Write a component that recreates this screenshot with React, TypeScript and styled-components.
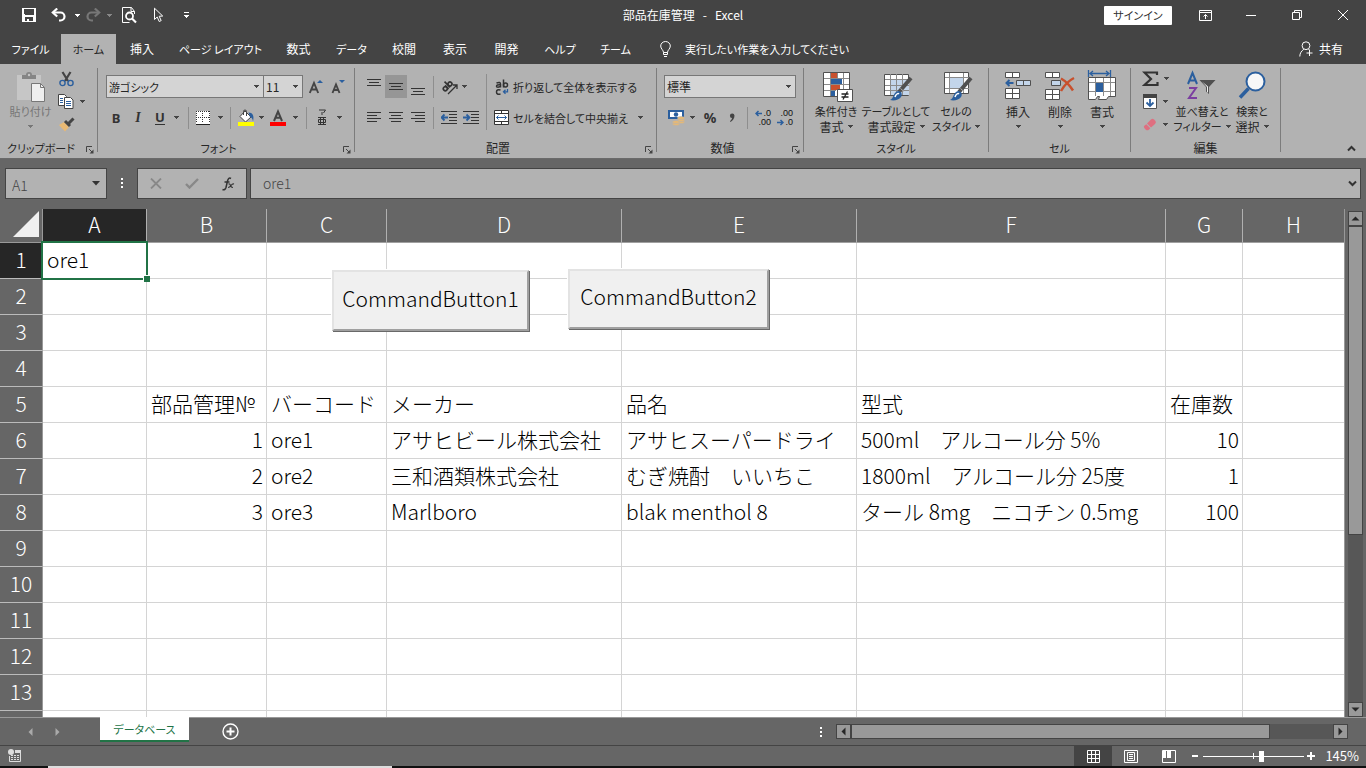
import React from "react";
import styled, { createGlobalStyle, css } from "styled-components";

const UI = `"Noto Sans CJK JP", "Noto Sans", sans-serif`;

const GlobalStyle = createGlobalStyle`
  * { box-sizing: border-box; }
  html, body, #root { height: 100%; }
  body {
    margin: 0;
    overflow: hidden;
    background: #666;
    color: #262626;
    font: 12px/16px ${UI};
    font-feature-settings: "palt";
  }
  button, input, select { font: inherit; font-feature-settings: inherit; color: inherit; }
  svg { display: block; flex: none; }
`;

/* ---------- shell ---------- */

const Shell = styled.div`
  display: flex;
  flex-direction: column;
  height: 100vh;
  white-space: nowrap;
`;

const PlainButton = styled.button`
  display: flex;
  align-items: center;
  justify-content: center;
  padding: 0;
  border: 0;
  background: none;
`;

const Text = styled.span<{ $compact: boolean }>`
  font-size: ${(p) => (p.$compact ? 11 : 12)}px;
`;

/* Labels with kana are set one size smaller than pure kanji ones. */
const Label = ({ children }: { children: string }) => (
  <Text $compact={/[ぁ-ヶ]/.test(children)}>{children}</Text>
);

/* ---------- title bar ---------- */

const TitleBar = styled.header`
  display: grid;
  grid-template-columns: 1fr auto 1fr;
  align-items: center;
  height: 34px;
  padding-bottom: 4px;
  background: #444;
  color: #fff;
`;

const QuickAccess = styled.div`
  display: flex;
  align-items: center;
  height: 30px;
  padding-left: 16px;
`;

const QuickButton = styled(PlainButton)<{ $w: number }>`
  width: ${(p) => p.$w}px;
  height: 30px;
`;

const Title = styled.h1`
  display: flex;
  gap: 8px;
  margin: 0;
  font-size: 12px;
  font-weight: 400;
`;

const WindowControls = styled.div`
  display: flex;
  align-items: center;
  justify-content: flex-end;
`;

const SignIn = styled(PlainButton)`
  width: 68px;
  height: 19px;
  margin-right: 10px;
  border-radius: 1px;
  background: #fff;
  color: #333;
`;

const WindowButton = styled(PlainButton)`
  width: 46px;
  height: 30px;
`;

/* ---------- ribbon tabs ---------- */

const TabStrip = styled.nav`
  display: flex;
  align-items: stretch;
  height: 30px;
  background: #444;
  color: #fff;
`;

const Tab = styled(PlainButton)<{ $w: number; $active?: boolean }>`
  width: ${(p) => p.$w}px;
  ${(p) => p.$active && css`
    background: #b2b2b2;
    color: #262626;
  `}
`;

const TellMe = styled(PlainButton)`
  gap: 14px;
  margin-left: 17px;
`;

const Share = styled(PlainButton)`
  gap: 6px;
  margin-left: auto;
  margin-right: 23px;
`;

/* ---------- ribbon ---------- */

const Ribbon = styled.section`
  display: flex;
  height: 95px;
  background: #b2b2b2;
  border-bottom: 1px solid #6a6a6a;
`;

const Group = styled.div<{ $w: number }>`
  display: flex;
  flex-direction: column;
  width: ${(p) => p.$w}px;
`;

const GroupBody = styled.div<{ $pad?: number }>`
  display: flex;
  height: 76px;
  padding-left: ${(p) => p.$pad ?? 0}px;
`;

const GroupFooter = styled.div`
  display: flex;
  align-items: center;
  height: 16px;
`;

const GroupLabel = styled.span`
  flex: 1;
  text-align: center;
`;

const Launcher = styled(PlainButton)`
  width: 15px;
  height: 16px;
  padding-top: 3px;
`;

const GroupDivider = styled.div`
  width: 1px;
  margin: 4px 0 6px;
  background: #7c7c7c;
`;

const Rows = styled.div<{ $pad?: number }>`
  display: flex;
  flex-direction: column;
  flex: none;
  gap: 8px;
  padding-top: 11px;
  padding-left: ${(p) => p.$pad ?? 8}px;
`;

const Row = styled.div`
  display: flex;
  align-items: center;
  height: 23px;
`;

const Stack = styled.div<{ $w: number }>`
  display: flex;
  flex-direction: column;
  width: ${(p) => p.$w}px;
  padding-top: 3px;
`;

const Tool = styled(PlainButton)<{ $w?: number; $on?: boolean }>`
  width: ${(p) => p.$w ?? 22}px;
  height: 23px;
  background: ${(p) => (p.$on ? "#969696" : "none")};
`;

const Letter = styled.span<{ $italic?: boolean; $underline?: boolean; $size?: number; $serif?: boolean }>`
  font: ${(p) => (p.$italic ? "italic" : "normal")} 700 ${(p) => p.$size ?? 13}px/14px
    ${(p) => (p.$serif ? `"Liberation Serif", serif` : `"Noto Sans", sans-serif`)};
  border-bottom: ${(p) => (p.$underline ? "1px solid #333" : "0")};
  color: #333;
`;

const ToolDivider = styled.div<{ $before?: number; $after?: number }>`
  width: 1px;
  height: 22px;
  margin-left: ${(p) => p.$before ?? 4}px;
  margin-right: ${(p) => p.$after ?? 4}px;
  background: #8e8e8e;
`;

const TallDivider = styled.div`
  flex: none;
  width: 1px;
  height: 56px;
  margin: 10px 7px 0 4px;
  background: #8e8e8e;
`;

const TextTool = styled(PlainButton)`
  justify-content: flex-start;
  gap: 4px;
  height: 23px;
`;

const ComboBox = styled.label<{ $w: number }>`
  position: relative;
  display: flex;
  width: ${(p) => p.$w}px;
  height: 23px;
  & + & { margin-left: -1px; }
  svg { position: absolute; right: 5px; top: 10px; pointer-events: none; }
`;

const ComboSelect = styled.select<{ $compact: boolean }>`
  appearance: none;
  width: 100%;
  padding: 0 0 0 2px;
  border: 1px solid #777;
  border-radius: 0;
  background: #d4d4d4;
  font-size: ${(p) => (p.$compact ? 11 : 12)}px;
`;

const BigButton = styled(PlainButton)<{ $w: number; $dim?: boolean }>`
  flex-direction: column;
  justify-content: flex-start;
  width: ${(p) => p.$w}px;
  padding-top: 6px;
  line-height: 15px;
  color: ${(p) => (p.$dim ? "#777" : "inherit")};
`;

const BigIcon = styled.span`
  display: block;
  height: 32px;
  margin-bottom: 2px;
`;

const BigLine = styled.span`
  display: flex;
  align-items: center;
  justify-content: center;
  gap: 4px;
  height: 15px;
`;

const Collapse = styled(PlainButton)`
  align-self: flex-end;
  width: 30px;
  height: 20px;
  margin-left: auto;
`;

/* ---------- formula bar ---------- */

const FormulaBar = styled.section`
  display: flex;
  height: 50px;
  padding: 9px 5px 10px;
  background: #666;
  color: #444;
`;

const barBox = css`
  height: 31px;
  border: 1px solid #444;
  background: #b2b2b2;
`;

const NameBox = styled.div`
  ${barBox}
  display: flex;
  align-items: center;
  width: 102px;
  padding-right: 6px;
`;

const BarInput = styled.input`
  flex: 1;
  min-width: 0;
  padding: 2px 0 0 6px;
  border: 0;
  background: none;
  font-size: 14px;
  font-weight: 300;
`;

const BarGrip = styled.div`
  display: flex;
  align-items: center;
  justify-content: center;
  width: 30px;
  height: 29px;
`;

const FormulaTools = styled.div`
  ${barBox}
  display: flex;
  width: 110px;
  margin-right: 3px;
`;

const FormulaButton = styled(PlainButton)`
  width: 36px;
`;

const FormulaField = styled.div`
  ${barBox}
  display: flex;
  align-items: center;
  flex: 1;
  padding-left: 6px;
  padding-right: 3px;
  ${BarInput} { padding-top: 0; padding-bottom: 2px; }
`;

/* ---------- sheet ---------- */

const Workspace = styled.main`
  display: flex;
  flex: 1;
  min-height: 0;
`;

const SheetArea = styled.div`
  position: relative;
  flex: 1;
  min-width: 0;
  overflow: hidden;
  background: #fff;
  border-right: 1px solid #999;
`;

const SheetTable = styled.table`
  width: 100%;
  table-layout: fixed;
  border-collapse: separate;
  border-spacing: 0;
  font-size: 21px;
  line-height: 33px;
  font-weight: 300;
  font-feature-settings: normal;
`;

const Column = styled.col<{ $w?: number }>`
  width: ${(p) => (p.$w ? `${p.$w}px` : "auto")};
`;

const Corner = styled.td`
  height: 34px;
  padding: 0 3px 3px 0;
  background: #666;
  border-right: 1px solid #999;
  border-bottom: 1px solid #999;
  svg { margin-left: auto; }
`;

const ColumnHead = styled.th<{ $active?: boolean }>`
  height: 34px;
  padding: 0 0 2px;
  background: ${(p) => (p.$active ? "#262626" : "#666")};
  border-right: 1px solid #b0b0b0;
  border-bottom: 1px solid #a0a0a0;
  color: #fff;
  font-weight: 300;
  line-height: 31px;
  &:last-child { border-right: 0; }
`;

const RowHead = styled.th<{ $active?: boolean }>`
  height: 36px;
  padding: 0 0 2px;
  background: ${(p) => (p.$active ? "#262626" : "#666")};
  border-right: 1px solid #999;
  border-bottom: 1px solid #bbb;
  color: #fff;
  font-weight: 300;
`;

const Cell = styled.td<{ $right?: boolean }>`
  position: relative;
  height: 36px;
  padding: 0 3px 2px 4px;
  border-right: 1px solid #d4d4d4;
  border-bottom: 1px solid #d4d4d4;
  color: #000;
  text-align: ${(p) => (p.$right ? "right" : "left")};
  &:last-child { border-right: 0; }
`;

const Selection = styled.span`
  position: absolute;
  z-index: 1;
  inset: -2px;
  border: 2px solid #217346;
  &::after {
    content: "";
    position: absolute;
    right: -4px;
    bottom: -4px;
    width: 6px;
    height: 6px;
    border: 1px solid #fff;
    border-width: 1px 0 0 1px;
    background: #217346;
  }
`;

const CommandButton = styled.button<{ $x: number; $y: number; $w: number; $h: number }>`
  position: absolute;
  z-index: 2;
  left: ${(p) => p.$x}px;
  top: ${(p) => p.$y}px;
  width: ${(p) => p.$w}px;
  height: ${(p) => p.$h}px;
  padding: 0 0 6px;
  border: 2px solid;
  border-color: #e3e3e3 #a0a0a0 #a0a0a0 #e3e3e3;
  box-shadow: 1px 1px 0 #696969, -1px -1px 0 #fff;
  background: #f0f0f0;
  color: #000;
  font-size: 21px;
  font-weight: 300;
  font-feature-settings: normal;
`;

const VerticalScroll = styled.div`
  display: flex;
  flex-direction: column;
  width: 21px;
  padding: 2px 3px 0;
  background: #666;
`;

const scrollPiece = css`
  border: 1px solid #444;
  background: #999;
`;

const ScrollButton = styled(PlainButton)`
  ${scrollPiece}
  flex: none;
  width: 15px;
  height: 15px;
`;

const ScrollTrack = styled.div<{ $vertical?: boolean }>`
  display: flex;
  flex: 1;
  flex-direction: ${(p) => (p.$vertical ? "column" : "row")};
  background: #575757;
`;

const ScrollThumb = styled.div<{ $share: number }>`
  ${scrollPiece}
  flex: 0 0 ${(p) => p.$share}%;
`;

/* ---------- sheet tabs ---------- */

const SheetBar = styled.div`
  display: flex;
  height: 28px;
  border-top: 1px solid #999;
  background: #666;
`;

const SheetNav = styled.div`
  display: flex;
  width: 100px;
  padding-left: 17px;
`;

const NavButton = styled(PlainButton)`
  width: 27px;
`;

const SheetTab = styled(PlainButton)`
  width: 89px;
  height: 25px;
  margin-top: -1px;
  border-bottom: 2px solid #217346;
  background: #fff;
  color: #217346;
`;

const AddSheet = styled(PlainButton)`
  width: 82px;
`;

const ScrollArea = styled.div`
  display: flex;
  align-items: center;
  width: 41%;
  margin-left: auto;
  padding-right: 18px;
`;

const ScrollGrip = styled.div`
  display: flex;
  flex: none;
  justify-content: center;
  width: 30px;
`;

const HorizontalScroll = styled.div`
  display: flex;
  flex: 1;
  height: 15px;
`;

/* ---------- status bar ---------- */

const StatusBar = styled.footer`
  display: flex;
  align-items: stretch;
  height: 21px;
  border-top: 1px solid #444;
  background: #666;
  color: #fff;
`;

const StatusButton = styled(PlainButton)<{ $w: number; $on?: boolean }>`
  width: ${(p) => p.$w}px;
  background: ${(p) => (p.$on ? "#444" : "none")};
`;

const ViewControls = styled.div`
  display: flex;
  margin-left: auto;
  padding-right: 7px;
`;

const ZoomSlider = styled.input`
  align-self: center;
  appearance: none;
  width: 101px;
  height: 12px;
  margin: 0 1px;
  background:
    linear-gradient(#fff, #fff) 50% 50% / 1px 6px no-repeat,
    linear-gradient(#fff, #fff) 0 50% / 100% 1px no-repeat;
  &::-webkit-slider-thumb {
    appearance: none;
    width: 5px;
    height: 11px;
    border: 0;
    background: #fff;
  }
`;

const ZoomLevel = styled(PlainButton)`
  width: 42px;
  justify-content: flex-end;
  font-size: 13px;
`;

const TaskbarEdge = styled.div`
  display: flex;
  height: 2px;
  padding-left: 48px;
  background: #111;
`;

const TaskbarItem = styled.div`
  width: 344px;
  background: #ddd;
`;

/* ---------- icons ---------- */

const Caret = ({ color = "#444" }: { color?: string }) => (
  <svg width="5" height="3" viewBox="0 0 5 3" shapeRendering="crispEdges"><path d="M0 0h5v1H0zM1 1h3v1H1zM2 2h1v1H2z" fill={color} /></svg>
);

const Arrow = ({ dir }: { dir: "up" | "down" | "left" | "right" }) => {
  const d = { up: "M4.5 2.5l4 4h-8z", down: "M.5 2.5h8l-4 4z", left: "M6.5.5v8l-4-4z", right: "M2.5.5v8l4-4z" }[dir];
  return <svg width="9" height="9" viewBox="0 0 9 9"><path d={d} fill="#262626" /></svg>;
};

const SaveIcon = () => (
  <svg width="14" height="14" viewBox="0 0 14 14" shapeRendering="crispEdges"><path fill="#fff" fillRule="evenodd" d="M0 0h13l1 1v13H0zM2 1v5l1 1h8l1-1V1zM3 9v4h2v-2h2v2h4V9z" /></svg>
);
const UndoIcon = ({ redo }: { redo?: boolean }) => (
  <svg width="15" height="14" viewBox="0 0 15 14">
    <g transform={redo ? "matrix(-1 0 0 1 15 0)" : undefined} fill="none" stroke={redo ? "#777" : "#fff"} strokeWidth="2.200">
      <path d="M2 4.500h7.500a4 4 0 010 8H8" /><path d="M6.200.5L1.800 4.500l4.400 4" />
    </g>
  </svg>
);
const PreviewIcon = () => (
  <svg width="15" height="17" viewBox="0 0 15 17" fill="none" stroke="#fff"><path d="M12.500 7V4.500l-3-4H.5v15h7" /><path d="M9 .5V4.500h3.500" /><circle cx="7.500" cy="9" r="3.500" strokeWidth="1.800" fill="#444" /><path d="M10 11.500l4 4" strokeWidth="2.200" /></svg>
);
const CursorIcon = () => (
  <svg width="11" height="16" viewBox="0 0 11 16"><path d="M1.500 1.200v11.300l2.700-2.500 2 4.500 2-.9-2-4.300 3.500-.3z" fill="none" stroke="#fff" /></svg>
);
const CustomizeIcon = () => (
  <svg width="5" height="7" viewBox="0 0 5 7" shapeRendering="crispEdges" fill="#fff"><path d="M0 0h5v1H0zM0 3h5v1H0zM1 4h3v1H1zM2 5h1v1H2z" /></svg>
);
const RibbonOptionsIcon = () => (
  <svg width="13" height="11" viewBox="0 0 13 11" fill="none" stroke="#fff"><path d="M.5.5h12v10H.5zM.5 2.500h12M6.500 9V4.500M4.500 6.500l2-2 2 2" /></svg>
);
const MinimizeIcon = () => <svg width="10" height="1" viewBox="0 0 10 1"><path d="M0 0h10v1H0z" fill="#fff" /></svg>;
const RestoreIcon = () => (
  <svg width="10" height="10" viewBox="0 0 10 10" fill="none" stroke="#fff"><path d="M.5 2.500h7v7h-7zM2.500 2.500v-2h7v7h-2" /></svg>
);
const CloseIcon = () => <svg width="10" height="10" viewBox="0 0 10 10"><path d="M0 0l10 10M10 0L0 10" stroke="#fff" /></svg>;
const BulbIcon = () => (
  <svg width="11" height="16" viewBox="0 0 11 16" fill="none" stroke="#fff"><path d="M3.500 11.500C3.500 9 .7 8 .7 5a4.800 4.500 0 019.600 0c0 3-2.800 4-2.800 6.500zM3.500 11.500v2h4v-2M4 15.500h3" /></svg>
);
const PersonIcon = () => (
  <svg width="14" height="16" viewBox="0 0 14 16" fill="none" stroke="#fff"><circle cx="7" cy="4.700" r="3.900" /><path d="M.8 15.500c0-3.500 1.800-5.500 4-7.200M9.500 8l1 1M10.500 9v6M7.500 12h6" /></svg>
);

const PasteIcon = () => (
  <svg width="30" height="32" viewBox="0 0 30 32">
    <path d="M1 5h24v25H1z" fill="#c6c6c6" />
    <path d="M6 9V5h4a3 3 0 016 0h4v4z" fill="#858585" /><circle cx="13" cy="5" r="1.200" fill="#c6c6c6" />
    <path d="M15.500 13.500h9l4 4v14h-13z" fill="#efefef" stroke="#777" /><path d="M24.500 13.500v4h4" fill="none" stroke="#777" />
  </svg>
);
const CutIcon = () => (
  <svg width="15" height="16" viewBox="0 0 15 16"><path d="M3.500 1l5.500 9M11.500 1L6 10" stroke="#444" strokeWidth="2.200" /><g fill="none" stroke="#2b5f9e" strokeWidth="1.400"><circle cx="3.500" cy="12" r="2.600" /><circle cx="11.500" cy="12" r="2.600" /></g></svg>
);
const CopyIcon = () => (
  <svg width="16" height="15" viewBox="0 0 16 15"><g fill="#fff" stroke="#444"><path d="M.5.5h6l2 2v9h-8z" /><path d="M6.500 3.500h6l2.500 2.500v8.500H6.500z" /></g><path d="M2 4.500h3M2 6.500h3M2 8.500h3M8 7.500h5M8 9.500h5M8 11.500h5" stroke="#2b5f9e" /></svg>
);
const BrushIcon = () => (
  <svg width="16" height="15" viewBox="0 0 16 15"><path d="M0 8l5-3 5 5-4 4.500z" fill="#e8b974" /><path d="M6 4l5 5M9 7l5.500-5.500" stroke="#444" strokeWidth="3" /></svg>
);
const LauncherIcon = () => (
  <svg width="8" height="8" viewBox="0 0 8 8"><path d="M.5 6V.5H6M3 3l4 4" fill="none" stroke="#444" /><path d="M7.500 3.500v4h-4z" fill="#444" /></svg>
);
const SizeIcon = ({ small }: { small?: boolean }) => (
  <svg width="14" height="16" viewBox="0 0 14 16">
    {small
      ? <><path d="M1.500 14L5 5.500 8.500 14M2.800 11h4.400" fill="none" stroke="#444" strokeWidth="1.900" /><path d="M8 1h6l-3 3z" fill="#2b5f9e" /></>
      : <><path d="M.8 14L5 4l4.200 10M2.500 10.500h5" fill="none" stroke="#444" strokeWidth="1.900" /><path d="M8 4h6l-3-3z" fill="#2b5f9e" /></>}
  </svg>
);
const BorderIcon = () => (
  <svg width="14" height="14" viewBox="0 0 14 14"><path d="M0 0h14v14H0z" fill="#fff" /><g stroke="#333" strokeDasharray="1 1"><path d="M0 .5h13M0 6.500h13M.5 0v12M6.500 0v12M13.500 0v12" /></g><path d="M0 13.500h14" stroke="#222" /></svg>
);
const FillIcon = () => (
  <svg width="17" height="17" viewBox="0 0 17 17"><path d="M7 2l6 6-5.500 5L2 7.500z" fill="#fff" stroke="#444" /><path d="M5.500 6V2.500a1.500 1.500 0 013 0V7" fill="none" stroke="#444" /><path d="M10.500 3.500c4 0 6 3 4.500 9-.5-3-1.500-4-3-4.500z" fill="#2b5f9e" /><path d="M0 13h16v4H0z" fill="#ff0" /></svg>
);
const FontColorIcon = () => (
  <svg width="16" height="17" viewBox="0 0 16 17"><path d="M4 12l4-9.500L12 12M5.500 8.800h5" fill="none" stroke="#444" strokeWidth="2" /><path d="M0 13h16v4H0z" fill="red" /></svg>
);
const PhoneticIcon = () => (
  <svg width="10" height="17" viewBox="0 0 10 17" fill="none" stroke="#333"><path d="M2 1h6.500L6.500 4M5 3v3M1 8.500h8M1 15.500h8M3.500 8.500v7M6.500 8.500v7M1.500 10.500h7v3h-7z" /></svg>
);

const LinesIcon = ({ kind }: { kind: "top" | "middle" | "bottom" | "left" | "center" | "right" }) => {
  const vertical = { top: 1, middle: 5, bottom: 10 } as Record<string, number>;
  const start = vertical[kind];
  const lines = start !== undefined
    ? [[0, start, 14], [2, start + 3, 10], [0, start + 6, 14]]
    : [0, 1, 2, 3].map((i) => {
        const w = i % 2 ? 10 : 14;
        const x = kind === "left" ? 0 : kind === "center" ? (14 - w) / 2 : 14 - w;
        return [x, 3 + i * 3, w];
      });
  return <svg width="14" height="17" viewBox="0 0 14 17" shapeRendering="crispEdges">{lines.map(([x, y, w]) => <rect key={y} x={x} y={y} width={w} height="1" fill="#333" />)}</svg>;
};
const OrientationIcon = () => (
  <svg width="17" height="16" viewBox="0 0 17 16" fill="none" stroke="#333" strokeWidth="1.600">
    <g transform="rotate(-45 7 7)"><circle cx="3.200" cy="7" r="2" /><path d="M5.400 4.500v5M7.600 1.500v8" /><circle cx="9.800" cy="7" r="2" /></g>
    <path d="M7 15l8.500-8.500M12 6h4v4" strokeWidth="1.300" />
  </svg>
);
const IndentIcon = ({ more }: { more?: boolean }) => (
  <svg width="16" height="15" viewBox="0 0 16 15"><path d="M0 1.500h16M8 4.500h8M8 7.500h8M8 10.500h8M0 13.500h16" stroke="#333" /><path d={more ? "M0 7.500h6M3.500 4.500l3 3-3 3" : "M1 7.500h6M3.500 4.500l-3 3 3 3"} stroke="#2b5f9e" strokeWidth="1.800" fill="none" /></svg>
);
const WrapIcon = () => (
  <svg width="15" height="16" viewBox="-1 0 15 16" fill="none" stroke="#333" strokeWidth="1.500"><path d="M1.500 4q4-1.500 4 1v3.500M5.500 5.800q-4-.3-4 1.400t4 .3M8.500.5v8" /><circle cx="10.500" cy="6" r="2" /><path d="M5.500 11q-4-1-4 2t4 2" /><path d="M12.500 10v2.800H8.500M10.500 10.800l-2 2 2 2" stroke="#2b5f9e" strokeWidth="1.300" /></svg>
);
const MergeIcon = () => (
  <svg width="15" height="15" viewBox="0 0 15 15" fill="#fff" stroke="#333"><path d="M.5.5h14v14H.5zM.5 3.500h14M.5 11.500h14M7.500.5v3M7.500 11.500v3" /><path d="M2.500 7.500h10M4.500 5.500l-2 2 2 2M10.500 5.500l2 2-2 2" fill="none" stroke="#2b5f9e" /></svg>
);
const CurrencyIcon = () => (
  <svg width="17" height="16" viewBox="0 0 17 16"><path d="M0 0h16v9H0z" fill="#2b5f9e" /><path d="M2 2h12v5H2z" fill="#fff" /><circle cx="8" cy="4.500" r="2.200" fill="#2b5f9e" /><g fill="#e8b974" stroke="#b2b2b2" strokeWidth=".6"><ellipse cx="13" cy="12" rx="3.500" ry="1.500" /><ellipse cx="13" cy="10" rx="3.500" ry="1.500" /><ellipse cx="13" cy="8" rx="3.500" ry="1.500" /><ellipse cx="8" cy="14" rx="3.500" ry="1.500" /><ellipse cx="8" cy="12" rx="3.500" ry="1.500" /></g></svg>
);
const CommaIcon = () => <svg width="6" height="10" viewBox="0 0 6 10"><path d="M5.500 2.500c0 3-1.500 5-4 6.500l-.5-.8C2.300 7 3 6 3 5a2.300 2.300 0 112.500-2.500z" fill="#444" /></svg>;

const DecimalFace = styled.span`
  display: flex;
  flex-direction: column;
  width: 16px;
  color: #111;
  font: 9px/9px "Liberation Sans", sans-serif;
`;
const DecimalLine = styled.span`
  display: flex;
  align-items: center;
  justify-content: flex-end;
  gap: 1px;
  height: 9px;
`;
const SmallArrow = ({ right }: { right?: boolean }) => (
  <svg width="7" height="7" viewBox="0 0 7 7"><path d={right ? "M0 3.500h6M3.500 1L6 3.500 3.500 6" : "M1 3.500h6M3.500 1L1 3.500 3.500 6"} fill="none" stroke="#2b5f9e" strokeWidth="1.500" /></svg>
);

const StyleBrush = () => (
  <g><path d="M28 8L16 22" stroke="#505050" strokeWidth="4" /><path d="M17.500 18.500l3.500 3" stroke="#b2b2b2" /><path d="M7 30c4-1 3-8 8-9 3 0 5 3 3 6-2 3-7 4-11 3z" fill="#2b5f9e" /><path d="M12 27c1-3 3-4 4-3" stroke="#fff" fill="none" strokeWidth="1.500" /></g>
);
const ConditionalIcon = () => (
  <svg width="34" height="32" viewBox="-4 0 34 32">
    <path d="M.5 2.500h26v24H.5z" fill="#fff" stroke="#505050" />
    <path d="M8 3h6v5H8zM8 15h9v5H8z" fill="#c8502d" /><path d="M8 9h11v5H8zM8 21h4v5H8z" fill="#2b5f9e" />
    <path d="M7.500 3v23M14.500 3v5M20.500 3v20M1 8.500h25M1 14.500h25M1 20.500h12" stroke="#8a8a8a" />
    <path d="M14.500 19.500h15v12h-15z" fill="#fff" stroke="#505050" /><path d="M18.500 24h7M18.500 27h7M24.500 21.500l-4.500 8" stroke="#222" strokeWidth="1.300" />
  </svg>
);
const TableFormatIcon = () => (
  <svg width="34" height="32" viewBox="-4 0 34 32"><path d="M1.500 4.500h24v21h-24z" fill="#fff" stroke="#505050" /><path d="M7 10h19v15H7z" fill="#c3d5ea" /><path d="M7.500 4v21M13.500 4v21M19.500 4v21M2 9.500h24M2 15.500h24M2 20.500h24" stroke="#8a8a8a" /><StyleBrush /></svg>
);
const CellStyleIcon = () => (
  <svg width="34" height="32" viewBox="-4 0 34 32"><path d="M1.500 2.500h24v21h-24z" fill="#fff" stroke="#505050" /><path d="M7 8h14v10H7z" fill="#c3d5ea" /><path d="M6.500 3v20M20.500 3v20M2 7.500h24M2 18.500h24" stroke="#8a8a8a" /><StyleBrush /></svg>
);
const InsertCellsIcon = () => (
  <svg width="28" height="32" viewBox="0 0 28 32" fill="#fff" stroke="#505050"><path d="M1.500 2.500h14v5h-14zM8.500 2.500v5M1.500 18.500h14v10h-14zM1.500 23.500h14M8.500 18.500v10" /><path d="M12.500 10.500h14v5h-14zM19.500 10.500v5" fill="#c3d5ea" /><path d="M3 13h6.500M5.500 10l-3 3 3 3" fill="none" stroke="#2b5f9e" strokeWidth="2" /></svg>
);
const DeleteCellsIcon = () => (
  <svg width="30" height="32" viewBox="0 0 30 32" fill="#fff" stroke="#505050"><path d="M.5 2.500h14v5H.5zM7.500 2.500v5M.5 19.500h14v10H.5zM.5 24.500h14M7.500 19.500v10" /><path d="M6.500 10.500h9v5h-9z" fill="#c3d5ea" /><path d="M16 8.500q7 4 12 12M29 8q-8 4-13 13" fill="none" stroke="#c8502d" strokeWidth="2.500" /></svg>
);
const FormatCellsIcon = () => (
  <svg width="30" height="32" viewBox="0 0 30 32"><path d="M1.500 0v7M23.500 0v7M3 3.500h19M6 1L3 3.500 6 6M19 1l3 2.500L19 6" fill="none" stroke="#2b5f9e" strokeWidth="1.300" /><path d="M1.500 7.500h27v19h-7l-2 3h-8l1-3h-2l-2 3h-7z" fill="#fff" stroke="#505050" /><path d="M8.500 8v18M16.500 8v18M23.500 8v18M2 12.500h26M2 21.500h26" stroke="#8a8a8a" /><path d="M9 13h7v9H9z" fill="#2b5f9e" /></svg>
);
const SumIcon = () => <svg width="17" height="16" viewBox="0 0 17 16"><path d="M15 4V1.500H2.500L9 8l-6.500 6H15.500V11" fill="none" stroke="#333" strokeWidth="2.200" /></svg>;
const FillDownIcon = () => (
  <svg width="14" height="15" viewBox="0 0 14 15"><path d="M.5.5h13v14H.5z" fill="#fff" stroke="#505050" /><path d="M0 0h14v4H0z" fill="#444" /><path d="M7 5v7M3.500 8.500L7 12l3.500-3.500" fill="none" stroke="#2b5f9e" strokeWidth="1.800" /></svg>
);
const EraserIcon = () => (
  <svg width="14" height="13" viewBox="0 0 14 13"><path d="M8 1.500q1.500-1.500 3 0l1.500 1.500q1 1.500-.5 3L8 9.500 4 5.500z" fill="#df6f80" /><path d="M3.300 6.200l4 4-1.500 1.500q-1.500 1-3 0L1.300 10q-1-1.500 0-2.300z" fill="#df6f80" /></svg>
);
const SortFilterIcon = () => (
  <svg width="30" height="32" viewBox="0 0 30 32" fill="none"><path d="M1 14L5.500 3 10 14M2.500 10.500h6" stroke="#2b5f9e" strokeWidth="2" /><path d="M2 18h7L2 28h8" stroke="#7b3fa0" strokeWidth="2" /><path d="M12.500 10h16l-6.500 7v7l-3-2.500V17z" fill="#505050" /><path d="M15 11.500l5 5.500v5l1 .7v-6.200" fill="#eee" /></svg>
);
const SearchIcon = () => (
  <svg width="28" height="32" viewBox="0 0 28 32"><circle cx="17.500" cy="11.500" r="9" fill="#f7f7f7" stroke="#2b5f9e" strokeWidth="2" /><path d="M10.500 18.500L2 27.500" stroke="#2b5f9e" strokeWidth="3.500" /></svg>
);
const ChevronIcon = ({ down }: { down?: boolean }) => (
  <svg width="9" height="7" viewBox="0 0 9 7"><path d={down ? "M1 1.500L4.500 5 8 1.500" : "M1 5.500L4.500 2 8 5.500"} fill="none" stroke="#333" strokeWidth="2" /></svg>
);
const DotsIcon = () => <svg width="2" height="10" viewBox="0 0 2 10" shapeRendering="crispEdges"><path d="M0 0h2v2H0zM0 4h2v2H0zM0 8h2v2H0z" fill="#fff" /></svg>;
const CancelIcon = () => <svg width="12" height="11" viewBox="0 0 12 11"><path d="M1 .5l10 10M11 .5L1 10.500" stroke="#888" strokeWidth="1.800" /></svg>;
const EnterIcon = () => <svg width="14" height="11" viewBox="0 0 14 11"><path d="M1 6l3.500 3.500L13 1" fill="none" stroke="#888" strokeWidth="2.400" /></svg>;
const FxIcon = () => (
  <svg width="13" height="14" viewBox="0 0 13 14" fill="none" stroke="#333" strokeWidth="1.500"><path d="M9 1.500Q6.500 0 5.500 4L4 10.500Q3 13.500.5 12.500M2.500 5h5" /><path d="M6.500 7q1.500-.5 2 1.500t2.500 2M12 7q-1.500-.5-3 1.500t-3 2" strokeWidth="1.200" /></svg>
);
const AddIcon = () => (
  <svg width="17" height="17" viewBox="0 0 17 17" fill="none" stroke="#fff"><circle cx="8.500" cy="8.500" r="7.500" strokeWidth="1.400" /><path d="M8.500 4.500v8M4.500 8.500h8" strokeWidth="2" /></svg>
);
const NavIcon = ({ right }: { right?: boolean }) => <svg width="5" height="8" viewBox="0 0 5 8"><path d={right ? "M.5 0v8l4-4z" : "M4.500 0v8l-4-4z"} fill="#aaa" /></svg>;
const MacroIcon = () => (
  <svg width="14" height="14" viewBox="0 0 14 14"><circle cx="3" cy="3" r="3" fill="#ddd" /><path d="M7 1.500h5.500v11h-11V7" fill="none" stroke="#ddd" /><path d="M7 1h6v3H7z" fill="#ddd" /><path d="M3 6.500h9M3 8.500h9M3 10.500h9" stroke="#ddd" strokeDasharray="2 1" /></svg>
);
const NormalViewIcon = () => <svg width="13" height="13" viewBox="0 0 13 13"><path d="M.5.5h12v12H.5zM4.500 0v13M8.500 0v13M0 4.500h13M0 8.500h13" fill="none" stroke="#fff" /></svg>;
const PageViewIcon = () => <svg width="14" height="13" viewBox="0 0 14 13"><path d="M.5.5h13v12H.5zM3.500 2.500h7v8h-7zM5 4.500h4M5 6.500h4M5 8.500h4" fill="none" stroke="#fff" /></svg>;
const BreakViewIcon = () => <svg width="14" height="13" viewBox="0 0 14 13"><path d="M.5.5h13v12H.5z" fill="none" stroke="#fff" /><path d="M1 1h3v7H1zM5 1h4v7H5z" fill="#fff" /></svg>;
const SignIcon = ({ plus }: { plus?: boolean }) => (
  <svg width="8" height="8" viewBox="0 0 8 8"><path d={plus ? "M0 4h8M4 0v8" : "M1 4h6"} stroke="#fff" strokeWidth="2" /></svg>
);

/* ---------- data ---------- */

const TABS: [string, number][] = [
  ["ファイル", 61], ["ホーム", 55], ["挿入", 52], ["ページ レイアウト", 105], ["数式", 51], ["データ", 55],
  ["校閲", 50], ["表示", 52], ["開発", 51], ["ヘルプ", 56], ["チーム", 55],
];

const COLUMNS: { name: string; w?: number }[] = [
  { name: "A", w: 104 }, { name: "B", w: 120 }, { name: "C", w: 120 }, { name: "D", w: 235 },
  { name: "E", w: 235 }, { name: "F", w: 309 }, { name: "G", w: 77 }, { name: "H" },
];

const ROW_NUMBERS = [1, 2, 3, 4, 5, 6, 7, 8, 9, 10, 11, 12, 13];

const ROWS: Record<number, (string | number)[]> = {
  1: ["ore1"],
  5: ["", "部品管理№", "バーコード", "メーカー", "品名", "型式", "在庫数"],
  6: ["", 1, "ore1", "アサヒビール株式会社", "アサヒスーパードライ", "500ml　アルコール分 5%", 10],
  7: ["", 2, "ore2", "三和酒類株式会社", "むぎ焼酎　いいちこ", "1800ml　アルコール分 25度", 1],
  8: ["", 3, "ore3", "Marlboro", "blak menthol 8", "タール 8mg　ニコチン 0.5mg", 100],
};

/* ---------- parts ---------- */

const Footer = ({ label, launcher }: { label: string; launcher?: boolean }) => (
  <GroupFooter>
    <GroupLabel><Label>{label}</Label></GroupLabel>
    {launcher && <Launcher aria-label={`${label}の設定`}><LauncherIcon /></Launcher>}
  </GroupFooter>
);

const Drop = ({ w = 12 }: { w?: number }) => <Tool $w={w} aria-label="メニュー"><Caret /></Tool>;

const Combo = ({ w, value, name }: { w: number; value: string; name: string }) => (
  <ComboBox $w={w}>
    <ComboSelect $compact={/[ぁ-ヶ]/.test(value)} aria-label={name} defaultValue={value}><option>{value}</option></ComboSelect>
    <Caret />
  </ComboBox>
);

const Big = ({ w, icon, lines, dim }: { w: number; icon: React.ReactNode; lines: string[]; dim?: boolean }) => (
  <BigButton $w={w} $dim={dim}>
    <BigIcon>{icon}</BigIcon>
    <BigLine><Label>{lines[0]}</Label></BigLine>
    <BigLine>{lines[1] && <Label>{lines[1]}</Label>}<Caret color={dim ? "#777" : "#444"} /></BigLine>
  </BigButton>
);

const Sheet = () => (
  <SheetArea>
    <SheetTable>
      <colgroup>
        <Column $w={43} />
        {COLUMNS.map((c) => <Column key={c.name} $w={c.w} />)}
      </colgroup>
      <thead>
        <tr>
          <Corner><svg width="26" height="26" viewBox="0 0 26 26"><path d="M26 0v26H0z" fill="#f0f0f0" /></svg></Corner>
          {COLUMNS.map((c) => <ColumnHead key={c.name} scope="col" $active={c.name === "A"}>{c.name}</ColumnHead>)}
        </tr>
      </thead>
      <tbody>
        {ROW_NUMBERS.map((n) => (
          <tr key={n}>
            <RowHead scope="row" $active={n === 1}>{n}</RowHead>
            {COLUMNS.map((c, i) => {
              const value = ROWS[n]?.[i];
              return (
                <Cell key={c.name} $right={typeof value === "number"}>
                  {value}
                  {n === 1 && i === 0 && <Selection />}
                </Cell>
              );
            })}
          </tr>
        ))}
        <tr>
          <RowHead />
          {COLUMNS.map((c) => <Cell key={c.name} />)}
        </tr>
      </tbody>
    </SheetTable>
    <CommandButton $x={332} $y={61} $w={197} $h={61}>CommandButton1</CommandButton>
    <CommandButton $x={568} $y={60} $w={201} $h={60}>CommandButton2</CommandButton>
  </SheetArea>
);

export default function App() {
  return (
    <Shell>
      <GlobalStyle />
      <TitleBar>
        <QuickAccess>
          <QuickButton $w={26} aria-label="上書き保存"><SaveIcon /></QuickButton>
          <QuickButton $w={32} aria-label="元に戻す"><UndoIcon /></QuickButton>
          <QuickButton $w={6} aria-label="元に戻すメニュー"><Caret color="#fff" /></QuickButton>
          <QuickButton $w={26} aria-label="やり直し"><UndoIcon redo /></QuickButton>
          <QuickButton $w={6} aria-label="やり直しメニュー"><Caret color="#888" /></QuickButton>
          <QuickButton $w={34} aria-label="印刷プレビュー"><PreviewIcon /></QuickButton>
          <QuickButton $w={24} aria-label="選択"><CursorIcon /></QuickButton>
          <QuickButton $w={32} aria-label="カスタマイズ"><CustomizeIcon /></QuickButton>
        </QuickAccess>
        <Title><span>部品在庫管理</span><span>-</span><span>Excel</span></Title>
        <WindowControls>
          <SignIn><Label>サインイン</Label></SignIn>
          <WindowButton aria-label="リボンの表示オプション"><RibbonOptionsIcon /></WindowButton>
          <WindowButton aria-label="最小化"><MinimizeIcon /></WindowButton>
          <WindowButton aria-label="元のサイズ"><RestoreIcon /></WindowButton>
          <WindowButton aria-label="閉じる"><CloseIcon /></WindowButton>
        </WindowControls>
      </TitleBar>

      <TabStrip>
        {TABS.map(([name, w]) => <Tab key={name} $w={w} $active={name === "ホーム"}><Label>{name}</Label></Tab>)}
        <TellMe><BulbIcon /><Label>実行したい作業を入力してください</Label></TellMe>
        <Share><PersonIcon /><Label>共有</Label></Share>
      </TabStrip>

      <Ribbon>
        <Group $w={97}>
          <GroupBody $pad={3}>
            <Big w={55} icon={<PasteIcon />} lines={["貼り付け", ""]} dim />
            <Stack $w={38}>
              <Row><Tool $w={16} aria-label="切り取り"><CutIcon /></Tool></Row>
              <Row><Tool $w={16} aria-label="コピー"><CopyIcon /></Tool><Drop w={16} /></Row>
              <Row><Tool $w={18} aria-label="書式のコピー"><BrushIcon /></Tool></Row>
            </Stack>
          </GroupBody>
          <Footer label="クリップボード" launcher />
        </Group>
        <GroupDivider />

        <Group $w={256}>
          <GroupBody>
            <Rows>
              <Row>
                <Combo w={158} value="游ゴシック" name="フォント" />
                <Combo w={40} value="11" name="フォント サイズ" />
                <Tool $w={26} aria-label="拡大"><SizeIcon /></Tool>
                <Tool $w={18} aria-label="縮小"><SizeIcon small /></Tool>
              </Row>
              <Row>
                <Tool $w={20} aria-label="太字"><Letter>B</Letter></Tool>
                <Tool $w={24} aria-label="斜体"><Letter $italic $serif $size={14}>I</Letter></Tool>
                <Tool $w={20} aria-label="下線"><Letter $underline>U</Letter></Tool>
                <Drop />
                <ToolDivider $before={6} $after={3} />
                <Tool aria-label="罫線"><BorderIcon /></Tool><Drop />
                <ToolDivider />
                <Tool aria-label="塗りつぶし"><FillIcon /></Tool><Drop w={8} />
                <Tool $w={26} aria-label="フォントの色"><FontColorIcon /></Tool><Drop w={8} />
                <ToolDivider $before={7} />
                <Tool aria-label="ふりがな"><PhoneticIcon /></Tool><Drop />
              </Row>
            </Rows>
          </GroupBody>
          <Footer label="フォント" launcher />
        </Group>
        <GroupDivider />

        <Group $w={301}>
          <GroupBody>
            <Rows>
              <Row>
                <Tool aria-label="上揃え"><LinesIcon kind="top" /></Tool>
                <Tool $on aria-label="上下中央揃え"><LinesIcon kind="middle" /></Tool>
                <Tool aria-label="下揃え"><LinesIcon kind="bottom" /></Tool>
                <ToolDivider />
                <Tool aria-label="方向"><OrientationIcon /></Tool><Drop w={8} />
              </Row>
              <Row>
                <Tool aria-label="左揃え"><LinesIcon kind="left" /></Tool>
                <Tool aria-label="中央揃え"><LinesIcon kind="center" /></Tool>
                <Tool aria-label="右揃え"><LinesIcon kind="right" /></Tool>
                <ToolDivider />
                <Tool aria-label="インデントを減らす"><IndentIcon /></Tool>
                <Tool aria-label="インデントを増やす"><IndentIcon more /></Tool>
              </Row>
            </Rows>
            <TallDivider />
            <Rows $pad={0}>
              <Row><TextTool><WrapIcon /><Label>折り返して全体を表示する</Label></TextTool></Row>
              <Row><TextTool><MergeIcon /><Label>セルを結合して中央揃え</Label></TextTool><Drop w={26} /></Row>
            </Rows>
          </GroupBody>
          <Footer label="配置" launcher />
        </Group>
        <GroupDivider />

        <Group $w={146}>
          <GroupBody>
            <Rows $pad={7}>
              <Row><Combo w={132} value="標準" name="表示形式" /></Row>
              <Row>
                <Tool $w={24} aria-label="通貨"><CurrencyIcon /></Tool><Drop w={8} />
                <Tool $w={28}><Letter $size={14}>%</Letter></Tool>
                <Tool $w={16} aria-label="桁区切り"><CommaIcon /></Tool>
                <ToolDivider $before={7} />
                <Tool aria-label="小数点以下の表示桁数を増やす">
                  <DecimalFace><DecimalLine><SmallArrow />.0</DecimalLine><DecimalLine>.00</DecimalLine></DecimalFace>
                </Tool>
                <Tool aria-label="小数点以下の表示桁数を減らす">
                  <DecimalFace><DecimalLine>.00</DecimalLine><DecimalLine><SmallArrow right />.0</DecimalLine></DecimalFace>
                </Tool>
              </Row>
            </Rows>
          </GroupBody>
          <Footer label="数値" launcher />
        </Group>
        <GroupDivider />

        <Group $w={184}>
          <GroupBody $pad={4}>
            <Big w={56} icon={<ConditionalIcon />} lines={["条件付き", "書式"]} />
            <Big w={64} icon={<TableFormatIcon />} lines={["テーブルとして", "書式設定"]} />
            <Big w={56} icon={<CellStyleIcon />} lines={["セルの", "スタイル"]} />
          </GroupBody>
          <Footer label="スタイル" />
        </Group>
        <GroupDivider />

        <Group $w={141}>
          <GroupBody $pad={8}>
            <Big w={42} icon={<InsertCellsIcon />} lines={["挿入", ""]} />
            <Big w={42} icon={<DeleteCellsIcon />} lines={["削除", ""]} />
            <Big w={42} icon={<FormatCellsIcon />} lines={["書式", ""]} />
          </GroupBody>
          <Footer label="セル" />
        </Group>
        <GroupDivider />

        <Group $w={149}>
          <GroupBody $pad={10}>
            <Stack $w={34}>
              <Row><Tool $w={18} aria-label="合計"><SumIcon /></Tool><Drop w={14} /></Row>
              <Row><Tool $w={18} aria-label="フィル"><FillDownIcon /></Tool><Drop /></Row>
              <Row><Tool $w={18} aria-label="クリア"><EraserIcon /></Tool><Drop /></Row>
            </Stack>
            <Big w={54} icon={<SortFilterIcon />} lines={["並べ替えと", "フィルター"]} />
            <Big w={46} icon={<SearchIcon />} lines={["検索と", "選択"]} />
          </GroupBody>
          <Footer label="編集" />
        </Group>
        <GroupDivider />
        <Collapse aria-label="リボンを折りたたむ"><ChevronIcon /></Collapse>
      </Ribbon>

      <FormulaBar>
        <NameBox><BarInput aria-label="名前ボックス" defaultValue="A1" /><svg width="8" height="5" viewBox="0 0 8 5"><path d="M0 0h8L4 4.500z" fill="#333" /></svg></NameBox>
        <BarGrip><DotsIcon /></BarGrip>
        <FormulaTools>
          <FormulaButton aria-label="キャンセル"><CancelIcon /></FormulaButton>
          <FormulaButton aria-label="入力"><EnterIcon /></FormulaButton>
          <FormulaButton aria-label="関数の挿入"><FxIcon /></FormulaButton>
        </FormulaTools>
        <FormulaField><BarInput aria-label="数式" defaultValue="ore1" /><PlainButton aria-label="数式バーの展開"><ChevronIcon down /></PlainButton></FormulaField>
      </FormulaBar>

      <Workspace>
        <Sheet />
        <VerticalScroll>
          <ScrollButton aria-label="上へ"><Arrow dir="up" /></ScrollButton>
          <ScrollTrack $vertical><ScrollThumb $share={65} /></ScrollTrack>
          <ScrollButton aria-label="下へ"><Arrow dir="down" /></ScrollButton>
        </VerticalScroll>
      </Workspace>

      <SheetBar>
        <SheetNav>
          <NavButton aria-label="前のシート"><NavIcon /></NavButton>
          <NavButton aria-label="次のシート"><NavIcon right /></NavButton>
        </SheetNav>
        <SheetTab><Label>データベース</Label></SheetTab>
        <AddSheet aria-label="新しいシート"><AddIcon /></AddSheet>
        <ScrollArea>
          <ScrollGrip><DotsIcon /></ScrollGrip>
          <HorizontalScroll>
            <ScrollButton aria-label="左へ"><Arrow dir="left" /></ScrollButton>
            <ScrollTrack><ScrollThumb $share={87} /></ScrollTrack>
            <ScrollButton aria-label="右へ"><Arrow dir="right" /></ScrollButton>
          </HorizontalScroll>
        </ScrollArea>
      </SheetBar>

      <StatusBar>
        <StatusButton $w={30} aria-label="マクロの記録"><MacroIcon /></StatusButton>
        <ViewControls>
          <StatusButton $w={38} $on aria-label="標準"><NormalViewIcon /></StatusButton>
          <StatusButton $w={38} aria-label="ページ レイアウト"><PageViewIcon /></StatusButton>
          <StatusButton $w={38} aria-label="改ページ プレビュー"><BreakViewIcon /></StatusButton>
          <StatusButton $w={14} aria-label="縮小"><SignIcon /></StatusButton>
          <ZoomSlider type="range" min={0} max={100} defaultValue={58} aria-label="ズーム" />
          <StatusButton $w={12} aria-label="拡大"><SignIcon plus /></StatusButton>
          <ZoomLevel>145%</ZoomLevel>
        </ViewControls>
      </StatusBar>
      <TaskbarEdge><TaskbarItem /></TaskbarEdge>
    </Shell>
  );
}
